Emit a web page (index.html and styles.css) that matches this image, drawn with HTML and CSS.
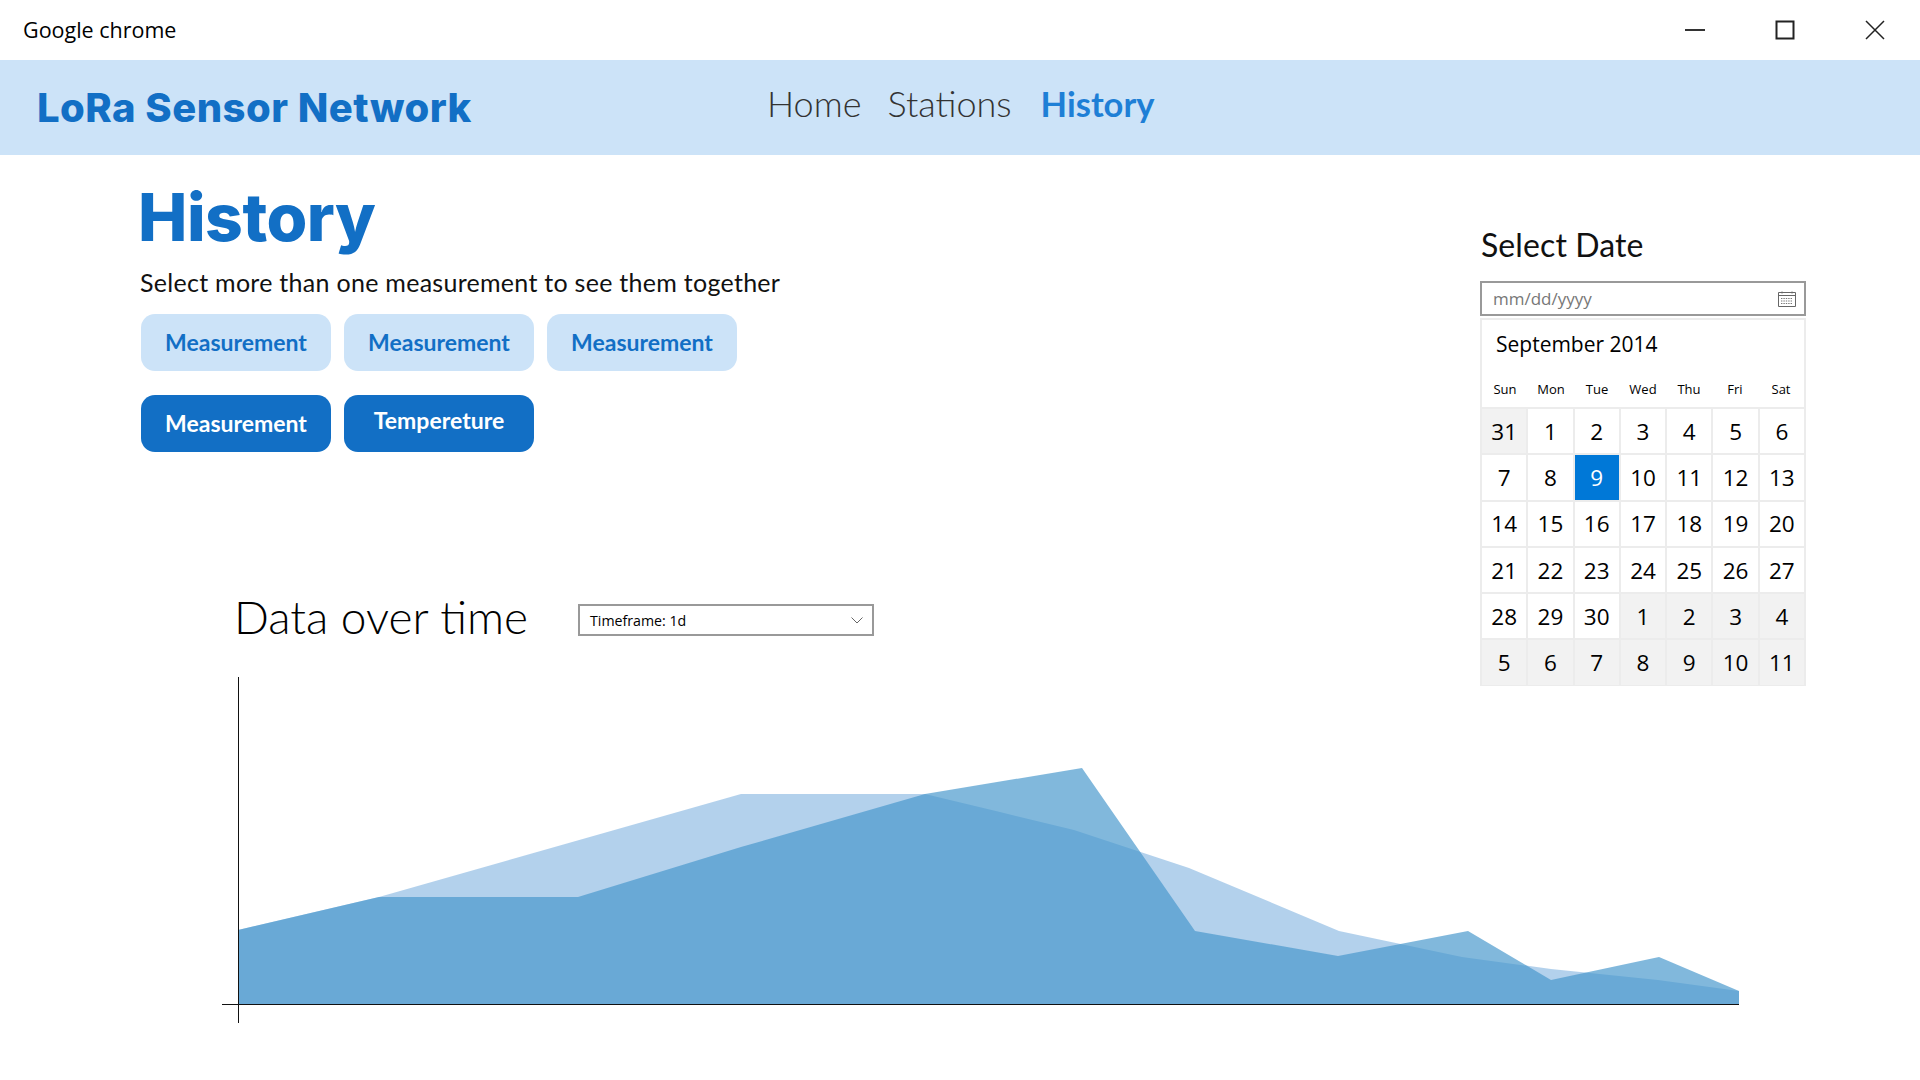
FILE: index.html
```html
<!DOCTYPE html>
<html lang="en">
<head>
    <meta charset="UTF-8">
    <meta name="viewport" content="width=device-width, initial-scale=1.0">
    <title>LoRa Sensor Network</title>
    <link rel="stylesheet" href="styles.css">
</head>
<body>
    <div class="titlebar">
        <span class="window-title">Google chrome</span>
        <div class="window-controls">
            <span class="control">
                <svg width="20" height="20" viewBox="0 0 20 20"><path d="M0 10H20" stroke="#333" stroke-width="2"/></svg>
            </span>
            <span class="control">
                <svg width="20" height="20" viewBox="0 0 20 20"><rect x="1.5" y="1.5" width="17" height="17" fill="none" stroke="#222" stroke-width="2"/></svg>
            </span>
            <span class="control">
                <svg width="20" height="20" viewBox="0 0 20 20"><path d="M1 1L19 19M19 1L1 19" stroke="#222" stroke-width="1.5"/></svg>
            </span>
        </div>
    </div>

    <header class="site-header">
        <div class="logo">LoRa Sensor Network</div>
        <nav class="site-nav">
            <a href="#">Home</a>
            <a href="#">Stations</a>
            <a href="#" class="active">History</a>
        </nav>
    </header>

    <main class="content">
        <section class="history">
            <h1>History</h1>
            <p class="hint">Select more than one measurement to see them together</p>
            <div class="chips">
                <button class="chip">Measurement</button>
                <button class="chip">Measurement</button>
                <button class="chip">Measurement</button>
                <button class="chip on">Measurement</button>
                <button class="chip on raised">Tempereture</button>
            </div>
            <div class="data-head">
                <h2>Data over time</h2>
                <div class="select">
                    <span>Timeframe: 1d</span>
                    <svg width="12" height="7" viewBox="0 0 12 7"><path d="M.5 .5L6 6L11.5 .5" fill="none" stroke="#666" stroke-width="1"/></svg>
                </div>
            </div>
        </section>

        <aside class="date-panel">
            <h3>Select Date</h3>
            <div class="date-input">
                <span>mm/dd/yyyy</span>
                <svg width="18" height="16" viewBox="0 0 18 16">
                    <path d="M.5 1.5H17.5V15.5H.5ZM.5 4.5H17.5M4 .5V2.5M14 .5V2.5" fill="none" stroke="#666"/>
                    <path d="M3 7.5H15M3 10H15M3 12.5H15" stroke="#777" stroke-width="1.2" stroke-dasharray="1.4 1"/>
                </svg>
            </div>
            <div class="calendar">
                <div class="cal-month">September 2014</div>
                <div class="cal-weekdays">
                    <span>Sun</span><span>Mon</span><span>Tue</span><span>Wed</span><span>Thu</span><span>Fri</span><span>Sat</span>
                </div>
                <div class="cal-days">
                    <span class="out">31</span><span>1</span><span>2</span><span>3</span><span>4</span><span>5</span><span>6</span>
                    <span>7</span><span>8</span><span class="today">9</span><span>10</span><span>11</span><span>12</span><span>13</span>
                    <span>14</span><span>15</span><span>16</span><span>17</span><span>18</span><span>19</span><span>20</span>
                    <span>21</span><span>22</span><span>23</span><span>24</span><span>25</span><span>26</span><span>27</span>
                    <span>28</span><span>29</span><span>30</span><span class="out">1</span><span class="out">2</span><span class="out">3</span><span class="out">4</span>
                    <span class="out">5</span><span class="out">6</span><span class="out">7</span><span class="out">8</span><span class="out">9</span><span class="out">10</span><span class="out">11</span>
                </div>
            </div>
        </aside>

        <svg class="chart" width="1920" height="350" viewBox="0 677 1920 350">
            <polygon class="area-a" points="238,1004 238,930 379,897 741,794 925,794 1000,812 1074,830 1189,868 1339,931 1462,957 1551,969 1658,980 1739,991 1739,1004"/>
            <polygon class="area-b" points="238,1004 238,930 379,897 578,897 741,847 925,794 1082,768 1195,931 1338,956 1468,931 1551,980 1659,957 1739,991 1739,1004"/>
            <path class="axis" d="M238.5 677V1023M222 1004.5H1739"/>
        </svg>
    </main>
</body>
</html>
```

FILE: styles.css
```css
* {
    box-sizing: border-box;
}

body {
    margin: 0;
    height: 1080px;
    overflow: hidden;
    background-color: #fff;
    color: #000;
    font-family: Lato, sans-serif;
}

.titlebar {
    height: 60px;
    display: flex;
    align-items: center;
    justify-content: space-between;
    padding-left: 23px;
}

.window-title {
    font-family: "Open Sans", sans-serif;
    font-size: 21.5px;
    margin-bottom: 2px;
}

.window-controls {
    display: flex;
}

.control {
    width: 90px;
    height: 60px;
    display: flex;
    align-items: center;
    justify-content: center;
}

.site-header {
    height: 95px;
    background-color: #cce3f8;
    display: flex;
    align-items: center;
    padding-left: 37px;
}

.logo {
    width: 730px;
    font-family: Inter, sans-serif;
    font-size: 40px;
    font-weight: 800;
    color: #126fc5;
    letter-spacing: 0.47px;
    margin-bottom: 1px;
}

.site-nav {
    display: flex;
    align-items: baseline;
    gap: 26px;
    font-size: 36px;
    font-weight: 300;
    margin-bottom: 10px;
}

.site-nav a {
    color: #333;
    text-decoration: none;
}

.site-nav a.active {
    color: #1e7fd6;
    font-size: 34.5px;
    font-weight: 700;
    margin-left: 3px;
}

.content {
    display: grid;
    grid-template-columns: 1fr 326px 114px;
}

.history {
    padding: 22px 0 0 138px;
}

h1 {
    margin: 0;
    font-family: Inter, sans-serif;
    font-size: 66px;
    line-height: 80px;
    font-weight: 800;
    letter-spacing: -0.5px;
    color: #126fc5;
}

.hint {
    margin: 9px 0 0 2px;
    font-size: 25px;
    line-height: 32px;
    font-weight: 400;
    letter-spacing: 0.28px;
    color: #111;
}

.chips {
    display: grid;
    grid-template-columns: repeat(3, 190px);
    gap: 24px 13px;
    margin: 16px 0 0 3px;
}

.chip {
    height: 57px;
    border: none;
    border-radius: 14px;
    padding: 0 0 2px;
    background-color: #cce3f8;
    color: #126fc5;
    font-family: Lato, sans-serif;
    font-size: 23px;
    font-weight: 700;
}

.chip.on {
    background-color: #126fc5;
    color: #fff;
}

.chip.raised {
    padding-bottom: 7px;
}

.data-head {
    display: flex;
    align-items: center;
    margin: 137px 0 0 96px;
}

h2 {
    margin: 0 0 6px;
    width: 344px;
    font-size: 46px;
    line-height: 56px;
    font-weight: 300;
}

.select {
    width: 296px;
    height: 32px;
    border: 2px solid #999;
    display: flex;
    align-items: center;
    justify-content: space-between;
    padding: 0 9px 0 10px;
    font-family: "Open Sans", sans-serif;
    font-size: 14.2px;
}

.date-panel {
    padding-top: 71px;
}

h3 {
    margin: 0 0 0 1px;
    font-size: 32px;
    line-height: 38px;
    font-weight: 400;
    letter-spacing: 0.1px;
    color: #111;
}

.date-input {
    height: 35px;
    margin-top: 17px;
    border: 2px solid #999;
    display: flex;
    align-items: center;
    justify-content: space-between;
    padding: 0 8px 0 11px;
    font-family: "Open Sans", sans-serif;
    font-size: 17px;
    color: #777;
}

.calendar {
    height: 368px;
    margin-top: 2px;
    background-color: #ececec;
    padding: 2px;
    font-family: "Open Sans", sans-serif;
}

.cal-month {
    height: 52px;
    background-color: #fff;
    padding: 10px 0 0 14px;
    font-size: 21px;
}

.cal-weekdays {
    height: 35px;
    background-color: #fff;
    display: grid;
    grid-template-columns: repeat(7, 1fr);
    align-items: center;
    text-align: center;
    font-size: 13px;
    padding-bottom: 2px;
}

.cal-days {
    display: grid;
    grid-template-columns: repeat(7, 1fr);
    grid-auto-rows: 44.3px;
    gap: 2px;
    margin-top: 2px;
}

.cal-days span {
    background-color: #fff;
    display: flex;
    align-items: center;
    justify-content: center;
    font-size: 22.5px;
}

.cal-days .out {
    background-color: #f2f2f2;
}

.cal-days .today {
    background-color: #0078d7;
    color: #fff;
}

.chart {
    grid-column: 1 / -1;
    display: block;
    margin-top: -9px;
}

.area-a {
    fill: #126fc5;
    fill-opacity: 0.32;
}

.area-b {
    fill: #4797cc;
    fill-opacity: 0.684;
}

.axis {
    fill: none;
    stroke: #111;
    stroke-width: 1;
}
```
